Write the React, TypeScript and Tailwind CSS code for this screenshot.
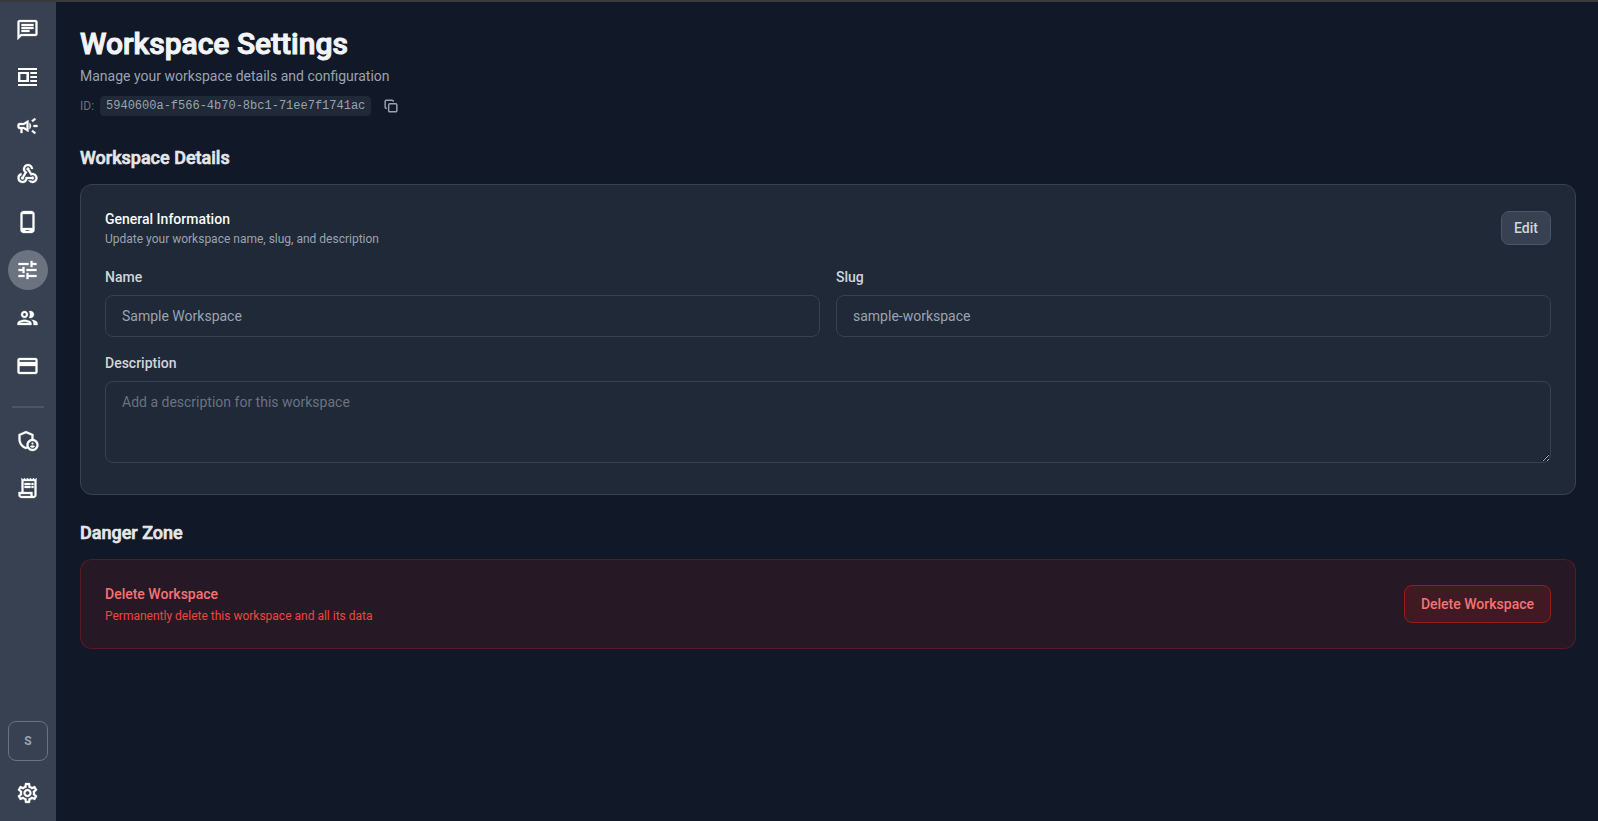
import type { ReactNode } from "react";
import {
  MdOutlineAdminPanelSettings,
  MdOutlineCampaign,
  MdOutlineChat,
  MdOutlineCreditCard,
  MdOutlinePhoneAndroid,
  MdOutlineReceiptLong,
  MdOutlineSettings,
  MdTune,
  MdWebhook,
} from "react-icons/md";
import { Copy } from "lucide-react";

function NewsIcon() {
  return (
    <svg width="24" height="24" viewBox="1 0 24 24" fill="currentColor" fillRule="evenodd" aria-hidden="true">
      <path d="M3 2h19v2H3zM3 18h19v2H3zM3 6h11v10H3zM5.4 8v6h6V8zM15.3 6H22v2h-6.7zM15.3 10H22v2h-6.7zM15.3 14H22v2h-6.7z" />
    </svg>
  );
}

function GroupIcon() {
  return (
    <svg width="24" height="24" viewBox="0.5 0 24 24" fill="currentColor" aria-hidden="true">
      <path d="M9 13.75c-2.34 0-7 1.17-7 3.5V19h14v-1.75c0-2.33-4.66-3.5-7-3.5zM4.34 17c.84-.58 2.87-1.25 4.66-1.25s3.82.67 4.66 1.25H4.34zM9 12c1.93 0 3.5-1.57 3.5-3.5S10.93 5 9 5 5.5 6.57 5.5 8.5 7.07 12 9 12zm0-5c.83 0 1.5.67 1.5 1.5S9.83 10 9 10s-1.5-.67-1.5-1.5S8.17 7 9 7zm7.04 6.81c1.16.84 1.96 1.96 1.96 3.44V19h4v-1.75c0-2.02-3.5-3.17-5.96-3.44zM15 12c1.93 0 3.5-1.57 3.5-3.5S16.93 5 15 5c-.54 0-1.04.13-1.5.35.63.89 1 1.98 1 3.15s-.37 2.26-1 3.15c.46.22.96.35 1.5.35z" stroke="currentColor" strokeWidth="0.3" />
    </svg>
  );
}

function NavLink({ label, active, children }: { label: string; active?: boolean; children: ReactNode }) {
  return (
    <a
      href="#"
      aria-label={label}
      aria-current={active ? "page" : undefined}
      className={
        active
          ? "flex size-10 items-center justify-center rounded-full bg-[#6b7280] text-white"
          : "flex size-10 items-center justify-center rounded-full text-white"
      }
    >
      {children}
    </a>
  );
}

const icon = {
  size: 24,
  viewBox: "0.5 0 24 24",
  className: "[&_path:not([fill=none])]:[stroke-width:0.3]",
};

function Sidebar() {
  return (
    <nav aria-label="Main" className="flex w-14 shrink-0 flex-col items-center bg-[#374151] py-2">
      <div className="flex flex-col gap-2">
        <NavLink label="Chat"><MdOutlineChat {...icon} /></NavLink>
        <NavLink label="Templates"><NewsIcon /></NavLink>
        <NavLink label="Campaigns"><MdOutlineCampaign {...icon} /></NavLink>
        <NavLink label="Webhooks"><MdWebhook {...icon} /></NavLink>
        <NavLink label="Devices"><MdOutlinePhoneAndroid {...icon} /></NavLink>
        <NavLink label="Workspace settings" active><MdTune {...icon} /></NavLink>
        <NavLink label="Members"><GroupIcon /></NavLink>
        <NavLink label="Billing"><MdOutlineCreditCard {...icon} /></NavLink>
      </div>
      <hr className="mt-5 mb-3 w-8 border-t-2 border-[#4b5563]" />
      <div className="flex flex-col gap-2">
        <NavLink label="Admin"><MdOutlineAdminPanelSettings {...icon} /></NavLink>
        <NavLink label="Logs"><MdOutlineReceiptLong {...icon} /></NavLink>
      </div>
      <div className="mt-auto flex flex-col gap-3">
        <button
          type="button"
          className="flex size-10 items-center justify-center rounded-lg border border-[#6b7280] text-xs font-bold text-[#9ca3af]"
        >
          S
        </button>
        <NavLink label="Settings"><MdOutlineSettings {...icon} /></NavLink>
      </div>
    </nav>
  );
}

const sectionTitleClass = "mb-3 text-lg font-medium text-[#e5e7eb] [-webkit-text-stroke:0.035em_#e5e7eb]";
const labelClass = "block text-sm font-medium text-[#d1d5db]";
const fieldClass =
  "mt-2 block w-full rounded-lg border border-[#374151] bg-[#1f2937] px-4 py-2.5 text-sm text-[#9ca3af] placeholder:text-[#6b7280]";

export default function App() {
  return (
    <div className="flex min-h-screen border-t-2 border-[#3b3b3b] bg-[#111827] font-[Roboto,sans-serif]">
      <Sidebar />
      <main className="min-w-0 flex-1 py-6 pr-[22px] pl-6">
        <header className="mb-[26px]">
          <h1 className="text-3xl font-medium text-[#f3f4f6] [-webkit-text-stroke:0.035em_#f3f4f6]">Workspace Settings</h1>
          <p className="mt-1 text-sm text-[#9ca3af]">Manage your workspace details and configuration</p>
          <div className="mt-2 flex items-center">
            <span className="text-xs text-[#6b7280]">ID:</span>
            <code className="ml-1.5 rounded bg-[#1f2937] px-1.5 py-0.5 font-['Liberation_Mono',monospace] text-xs text-[#9ca3af]">
              5940600a-f566-4b70-8bc1-71ee7f1741ac
            </code>
            <button
              type="button"
              aria-label="Copy workspace ID"
              className="ml-2 flex size-6 items-center justify-center rounded text-[#9ca3af]"
            >
              <Copy size={14} strokeWidth={2.5} />
            </button>
          </div>
        </header>

        <section className="mb-6">
          <h2 className={sectionTitleClass}>Workspace Details</h2>
          <form className="rounded-xl border border-[#374151] bg-[#1f2937] px-6 pt-6 pb-[31px]">
            <div className="mb-5 flex items-center justify-between">
              <div>
                <h3 className="text-sm font-medium text-[#f9fafb]">General Information</h3>
                <p className="mt-0.5 text-xs text-[#9ca3af]">Update your workspace name, slug, and description</p>
              </div>
              <button
                type="button"
                className="rounded-lg border border-[#4b5563] bg-[#374151] px-3 py-1.5 text-sm font-medium text-[#d1d5db]"
              >
                Edit
              </button>
            </div>
            <div className="grid grid-cols-2 gap-4">
              <div>
                <label htmlFor="name" className={labelClass}>Name</label>
                <input id="name" type="text" readOnly value="Sample Workspace" className={fieldClass} />
              </div>
              <div>
                <label htmlFor="slug" className={labelClass}>Slug</label>
                <input id="slug" type="text" readOnly value="sample-workspace" className={fieldClass} />
              </div>
              <div className="col-span-2">
                <label htmlFor="description" className={labelClass}>Description</label>
                <textarea
                  id="description"
                  rows={3}
                  readOnly
                  placeholder="Add a description for this workspace"
                  className={fieldClass}
                />
              </div>
            </div>
          </form>
        </section>

        <section>
          <h2 className={sectionTitleClass}>Danger Zone</h2>
          <div className="flex items-center justify-between rounded-xl border border-[#7f1d1d]/60 bg-[#7f1d1d]/20 p-6">
            <div>
              <h3 className="text-sm font-medium text-[#f87171]">Delete Workspace</h3>
              <p className="mt-1 text-xs text-[#ef4444]">Permanently delete this workspace and all its data</p>
            </div>
            <button
              type="button"
              className="rounded-lg border border-[#991b1b] bg-[#7f1d1d]/30 px-4 py-2 text-sm font-medium text-[#f87171]"
            >
              Delete Workspace
            </button>
          </div>
        </section>
      </main>
    </div>
  );
}
